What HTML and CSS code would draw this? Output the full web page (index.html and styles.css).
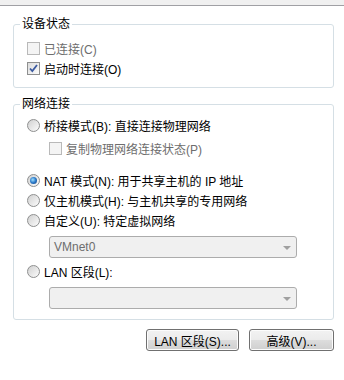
FILE: index.html
```html
<!DOCTYPE html>
<html lang="zh-CN">

<head>
    <meta charset="UTF-8">
    <title>网络适配器</title>
    <link rel="stylesheet" href="styles.css">
</head>

<body>
    <div class="topbar"></div>

    <fieldset class="group device">
        <legend>设备状态</legend>
        <div class="group-body">
            <div class="row disabled"><span class="box"></span>已连接(C)</div>
            <div class="row">
                <span class="box">
                    <svg width="11" height="11" viewBox="0 0 11 11"><path d="M2 5.5 L4.3 8 L9 2" fill="none" stroke="#3b5aa0" stroke-width="1.8"/></svg>
                </span>启动时连接(O)
            </div>
        </div>
    </fieldset>

    <fieldset class="group network">
        <legend>网络连接</legend>
        <div class="group-body">
            <div class="row first"><span class="radio"></span>桥接模式(B): 直接连接物理网络</div>
            <div class="row sub disabled"><span class="box"></span>复制物理网络连接状态(P)</div>
            <div class="row nat"><span class="radio on"></span>NAT 模式(N): 用于共享主机的 IP 地址</div>
            <div class="row"><span class="radio"></span>仅主机模式(H): 与主机共享的专用网络</div>
            <div class="row"><span class="radio"></span>自定义(U): 特定虚拟网络</div>
            <div class="select">VMnet0<span class="arrow"></span></div>
            <div class="row lan"><span class="radio"></span>LAN 区段(L):</div>
            <div class="select"><span class="arrow"></span></div>
        </div>
    </fieldset>

    <div class="buttons">
        <button class="btn lan-btn">LAN 区段(S)...</button>
        <button class="btn adv-btn">高级(V)...</button>
    </div>
</body>

</html>
```

FILE: styles.css
```css
body {
    margin: 0;
    background-color: #fff;
    font-family: "Liberation Sans", "Noto Sans CJK SC", sans-serif;
    font-size: 12px;
    color: #000;
}

.topbar {
    height: 5px;
    background-color: #f0f0f0;
    border-bottom: 1px solid #a0a0a4;
}

.group {
    margin: 10px 10px 0 13px;
    padding: 0;
    border: 1px solid #d5dfe5;
    border-radius: 3px;
}

.group legend {
    margin-left: 6px;
    padding: 0 2px;
    line-height: 16px;
}

.group.network {
    margin-top: 8px;
}

.device .group-body {
    padding: 6px 0 9px 13px;
}

.network .group-body {
    padding: 3px 0 10px 13px;
}

.row {
    display: flex;
    align-items: center;
    height: 20px;
    gap: 4px;
}

.row.disabled {
    color: #6d6d6d;
}

.network .row.sub {
    margin: 3px 0 0 22px;
}

.network .row.nat {
    margin-top: 12px;
}

.network .row.lan {
    margin-top: 3px;
}

/* checkbox */
.box {
    width: 11px;
    height: 11px;
    border: 1px solid #8e8f8f;
    background: linear-gradient(135deg, #dcdcdc, #fbfbfb);
    display: flex;
    align-items: center;
    justify-content: center;
    flex: none;
}

.box svg {
    display: block;
}

.disabled .box {
    border-color: #b9b9b9;
    background: #f4f4f4;
}

/* radio */
.radio {
    width: 11px;
    height: 11px;
    border: 1px solid #8e8f8f;
    border-radius: 50%;
    background: linear-gradient(135deg, #d0d0d0, #fcfcfc);
    display: flex;
    align-items: center;
    justify-content: center;
    flex: none;
}

.radio.on::after {
    content: "";
    width: 7px;
    height: 7px;
    border-radius: 50%;
    background: radial-gradient(circle at 40% 40%, #9fe0ff 0, #2a78c8 50%, #143f7a 100%);
}

/* dropdown */
.select {
    position: relative;
    margin: 6px 0 0 22px;
    width: 246px;
    height: 20px;
    border: 1px solid #acacac;
    border-radius: 3px;
    background-color: #f0f0f0;
    color: #6d6d6d;
    line-height: 20px;
    padding-left: 4px;
    box-sizing: content-box;
    width: 242px;
}

.select .arrow {
    position: absolute;
    right: 5px;
    top: 9px;
    border-left: 4px solid transparent;
    border-right: 4px solid transparent;
    border-top: 4px solid #a0a0a0;
}

.buttons {
    display: flex;
    justify-content: flex-end;
    gap: 10px;
    margin: 9px 10px 0 0;
}

.btn {
    height: 22px;
    font: inherit;
    color: #000;
    border: 1px solid #707070;
    border-radius: 3px;
    background: linear-gradient(#f2f2f2 0%, #ebebeb 50%, #dddddd 51%, #cfcfcf 100%);
    padding: 0;
    box-shadow: inset 0 0 0 1px #fcfcfc;
}

.lan-btn {
    width: 93px;
}

.adv-btn {
    width: 85px;
}
```
